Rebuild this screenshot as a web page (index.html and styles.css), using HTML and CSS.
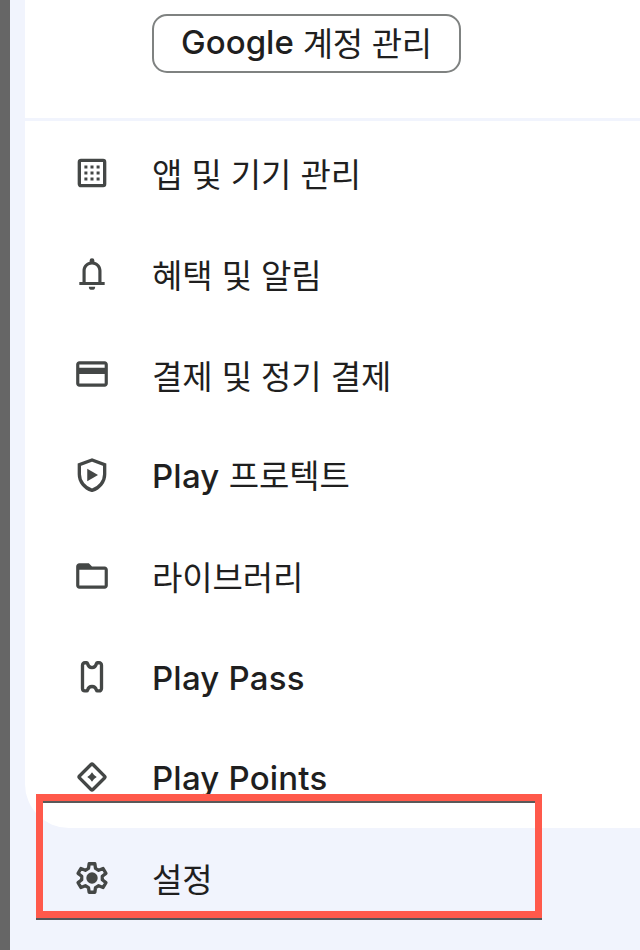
FILE: index.html
```html
<!DOCTYPE html>
<html lang="ko">
<head>
<meta charset="utf-8">
<title>Google Play</title>
<link rel="stylesheet" href="styles.css">
</head>
<body>
<div class="scrim"></div>
<main class="panel">
  <section class="card account">
    <button class="manage"><span class="latin google">Google</span> 계정 관리</button>
  </section>
  <nav class="card menu">
    <a class="row"><svg class="icon" viewBox="0 0 24 24"><rect x="4" y="4" width="16" height="16" rx="1" class="line"/><path d="M7.2 7.2h1.9v1.9H7.2zm3.85 0h1.9v1.9h-1.9zm3.85 0h1.9v1.9h-1.9zM7.2 11.05h1.9v1.9H7.2zm3.85 0h1.9v1.9h-1.9zm3.85 0h1.9v1.9h-1.9zM7.2 14.9h1.9v1.9H7.2zm3.85 0h1.9v1.9h-1.9zm3.85 0h1.9v1.9h-1.9z"/></svg><span class="label">앱 및 기기 관리</span></a>
    <a class="row"><svg class="icon" viewBox="0 0 24 24"><path d="M4 19v-2h2v-7c0-2.800 1.800-5.200 4.500-5.800V3.500a1.500 1.500 0 0 1 3 0v.7C16.200 4.800 18 7.200 18 10v7h2v2zm4-2h8v-7c0-2.200-1.800-4-4-4s-4 1.800-4 4zM12 22a2 2 0 0 1-2-2h4a2 2 0 0 1-2 2z"/></svg><span class="label">혜택 및 알림</span></a>
    <a class="row"><svg class="icon raised" viewBox="0 0 24 24"><path d="M20 4H4c-1.100 0-2 .9-2 2v12c0 1.100.9 2 2 2h16c1.100 0 2-.9 2-2V6c0-1.100-.9-2-2-2zm0 14H4v-6h16v6zm0-10H4V6h16v2z"/></svg><span class="label">결제 및 정기 결제</span></a>
    <a class="row"><svg class="icon" viewBox="0 0 24 24"><path class="line" d="M12 2.500 4 5.500v6c0 4.600 3.200 8.700 8 10.200 4.800-1.500 8-5.600 8-10.200v-6z"/><path d="M9 8v8l6.800-4z"/></svg><span class="label"><span class="latin">Play</span> 프로텍트</span></a>
    <a class="row"><svg class="icon" viewBox="0 0 24 24"><path d="M4 20c-1.100 0-2-.9-2-2V6c0-1.100.9-2 2-2h6l2 2h8c1.100 0 2 .9 2 2v10c0 1.100-.9 2-2 2zm0-2h16V8H4z"/></svg><span class="label">라이브러리</span></a>
    <a class="row"><svg class="icon" viewBox="0 0 24 24"><path class="line" d="M8.600 3H7.500A1.500 1.500 0 0 0 6 4.500v14.800a1.500 1.500 0 0 0 1.500 1.500h1.100c.3 0 .5-.2.6-.5.400-1.500 1.500-2.300 2.800-2.300s2.400.8 2.800 2.300c.1.300.3.500.6.500h1.100a1.500 1.500 0 0 0 1.500-1.500V4.500A1.500 1.500 0 0 0 16.500 3h-1.100c-.3 0-.5.2-.6.500C14.400 5.300 13.300 6.100 12 6.100S9.600 5.300 9.200 3.500C9.100 3.200 8.900 3 8.600 3z"/></svg><span class="label"><span class="latin">Play Pass</span></span></a>
    <a class="row"><svg class="icon" viewBox="0 0 24 24"><path class="line" d="m11.400 4.100-7.300 7.300a.85.85 0 0 0 0 1.200l7.300 7.300a.85.85 0 0 0 1.200 0l7.300-7.300a.85.85 0 0 0 0-1.200l-7.300-7.300a.85.85 0 0 0-1.200 0z"/><path d="m12 9 1.300 1.700L15 12l-1.700 1.300L12 15l-1.300-1.700L9 12l1.700-1.300z"/></svg><span class="label"><span class="latin">Play Points</span></span></a>
  </nav>
  <div class="settings">
    <a class="row"><svg class="icon" viewBox="0 0 24 24"><path class="gear" d="M10.200 3h3.600l.4 2.900 2 1.200 2.800-1.100 1.800 3.100-2.300 1.800v2.200l2.300 1.800-1.800 3.100-2.800-1.100-2 1.200-.4 2.900h-3.600l-.4-2.900-2-1.200L5 18l-1.800-3.100 2.300-1.800v-2.200L3.200 9.100 5 6l2.800 1.100 2-1.200z"/><circle cx="12" cy="12" r="3.600"/></svg><span class="label">설정</span></a>
    <div class="highlight"></div>
  </div>
</main>
</body>
</html>
```
FILE: styles.css
```css
* { box-sizing: border-box; }

body {
  margin: 0;
  height: 950px;
  display: flex;
  overflow: hidden;
  background: #f1f4fd;
  color: #1f1f1f;
  font-family: "Noto Sans CJK KR", sans-serif;
  font-size: 33px;
}

.scrim {
  width: 10px;
  flex: none;
  background: #666;
}

.panel {
  flex: 1;
  padding-left: 15px;
}

.card { background: #fff; }

.account {
  height: 118px;
  padding: 14px 0 0 127px;
  margin-bottom: 3px;
}

.manage {
  width: 309px;
  height: 59px;
  display: flex;
  align-items: center;
  justify-content: center;
  white-space: pre;
  padding: 0 0 4px;
  border: 2px solid #7f8281;
  border-radius: 15px;
  background: none;
  color: inherit;
  font: inherit;
  letter-spacing: -0.3px;
}

.menu {
  height: 707px;
  padding-top: 2px;
  border-bottom-left-radius: 44px;
}

.row {
  height: 100.7px;
  display: flex;
  align-items: center;
  padding-left: 48px;
}

.icon {
  width: 38px;
  height: 38px;
  flex: none;
  fill: #444746;
}

.raised { margin-bottom: 2px; }

.line, .gear {
  fill: none;
  stroke: #444746;
  stroke-width: 2.1;
}

.gear { stroke-linejoin: round; }

.label {
  margin-left: 41px;
  line-height: 48px;
  letter-spacing: -0.1px;
  white-space: pre;
}

.latin {
  font-family: Inter, sans-serif;
  font-weight: 500;
  letter-spacing: 0.2px;
}

.google { letter-spacing: 0; }

.settings { position: relative; }

.highlight {
  position: absolute;
  left: 11px;
  top: -34px;
  width: 506px;
  height: 124px;
  border: 7px solid #ff594b;
  filter: drop-shadow(0 2px 0.5px rgba(0, 0, 0, .65));
}
```
